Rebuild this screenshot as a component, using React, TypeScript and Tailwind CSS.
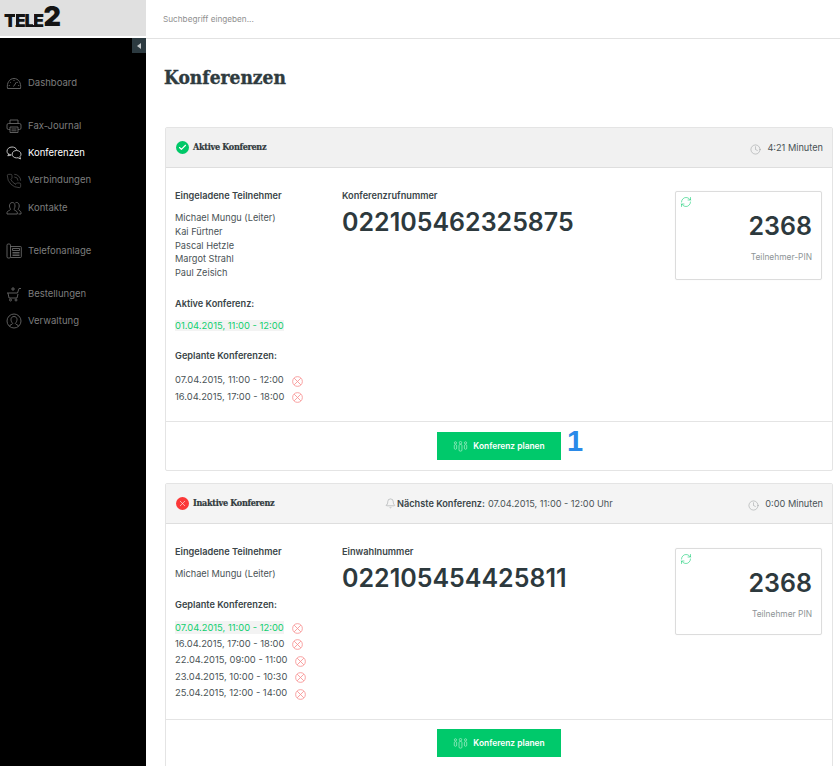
import React from "react";
import { PhoneCall, Check, X, RefreshCw, Clock, Bell } from "lucide-react";

const sans = "font-['Inter','Liberation_Sans',sans-serif]";
const slab = "font-['DejaVu_Serif_Condensed','DejaVu_Serif','Liberation_Serif',serif]";

type IconProps = { className?: string; strokeWidth?: number };

const GaugeIcon = ({ className }: IconProps) => (
  <svg viewBox="0 0 16 16" fill="none" stroke="currentColor" strokeWidth="0.9" className={className}>
    <path d="M1.500 13.500C.5 8 3.500 3.500 8 3.500s7.500 4.500 6.500 10z" />
    <path d="M8 5v1M4 7l.8.7M12 7l-.8.7M2.800 10.500h1M12.200 10.500h1M7.500 11.500l3-4.500" />
  </svg>
);

const PrinterIcon = ({ className }: IconProps) => (
  <svg viewBox="0 0 16 16" fill="none" stroke="currentColor" strokeWidth="0.9" className={className}>
    <path d="M4 5.500V2h8v3.500" />
    <path d="M4 11.500H2.500a1.500 1.500 0 0 1-1.500-1.500V7a1.500 1.500 0 0 1 1.500-1.500h11A1.500 1.500 0 0 1 15 7v3a1.500 1.500 0 0 1-1.500 1.500H12" />
    <path d="M4 9h8v5.500H4zM5.500 11h5M5.500 12.800h5" />
  </svg>
);

// Two overlapping speech bubbles
const BubblesIcon = ({ className }: IconProps) => (
  <svg viewBox="0 0 16 16" fill="none" stroke="currentColor" strokeWidth="0.9" className={className}>
    <path d="M5.500 10C3 10 1 8.400 1 6.200S3 2 6 2c2.300 0 4 1 4.700 2.800" />
    <path d="M3 8.800L1.800 10.800 5 10" />
    <path d="M10.500 5.500c-2.500 0-4.300 1.600-4.300 3.700s1.800 3.700 4.300 3.700c.5 0 1-.1 1.500-.2l2.500 1.300-.6-2.300c.7-.7 1.100-1.500 1.100-2.500 0-2.100-2-3.700-4.500-3.700z" />
  </svg>
);

const UsersIcon = ({ className }: IconProps) => (
  <svg viewBox="0 0 16 16" fill="none" stroke="currentColor" strokeWidth="0.9" className={className}>
    <path d="M1 14v-1.500c0-1.500 3-2 3.500-3C4.800 9 3.500 8 3.500 6s1-3.500 2.800-3.500S9 4 9 6 7.800 9 8 9.500c.5 1 3.300 1.500 3.300 3V14z" />
    <path d="M9.300 3c.3-.3.800-.5 1.400-.5C12.300 2.500 13.200 4 13.200 6s-1.200 3-1 3.500c.4 1 2.800 1.500 2.800 3V14h-2.500" />
  </svg>
);

// Handset next to a keypad
const PhoneSystemIcon = ({ className }: IconProps) => (
  <svg viewBox="0 0 16 16" fill="none" stroke="currentColor" strokeWidth="0.9" className={className}>
    <rect x="1" y="1" width="3.500" height="14" rx="1.200" />
    <path d="M4.500 3.500h10a.8.8 0 0 1 .8.800v9.400a.8.8 0 0 1-.8.800h-10" />
    <path d="M6.500 5.500h7v2h-7zM6.500 9.500h7M6.500 11h7M6.500 12.500h7" />
  </svg>
);

const CartIcon = ({ className }: IconProps) => (
  <svg viewBox="0 0 16 16" fill="none" stroke="currentColor" strokeWidth="0.9" className={className}>
    <path d="M1 7h10.500l1.500-4.500H15M2 7l1 5h8l1-4" />
    <path d="M7 1v4M5 3h4" />
    <circle cx="4.500" cy="14" r="1" />
    <circle cx="10" cy="14" r="1" />
  </svg>
);

const ProfileIcon = ({ className }: IconProps) => (
  <svg viewBox="0 0 16 16" fill="none" stroke="currentColor" strokeWidth="0.9" className={className}>
    <circle cx="8" cy="8" r="7" />
    <path d="M3.500 13.300c0-1.500 3-1.800 3.200-2.800C5.800 9.500 5 8 5 6.500 5 4.700 6.200 3.500 8 3.500s3 1.200 3 3c0 1.500-.8 3-1.700 4 .2 1 3.200 1.300 3.200 2.800" />
  </svg>
);

// Three figures on the green button
const PeopleIcon = ({ className }: IconProps) => (
  <svg viewBox="0 0 16 12" fill="none" stroke="currentColor" strokeWidth="0.8" className={className}>
    <circle cx="2.500" cy="2" r="1.200" />
    <rect x="1.200" y="4" width="2.600" height="5" rx="1.200" />
    <circle cx="8" cy="1.800" r="1.300" />
    <rect x="6.400" y="3.800" width="3.200" height="7.200" rx="1.200" />
    <circle cx="13.500" cy="2" r="1.200" />
    <rect x="12.200" y="4" width="2.600" height="5" rx="1.200" />
  </svg>
);

const CancelIcon = () => (
  <svg viewBox="0 0 12 12" fill="none" stroke="#f88f8f" strokeWidth="0.9" className="w-[11px] h-[11px] mt-[2px] shrink-0">
    <circle cx="6" cy="6" r="5.300" />
    <path d="M2.400 2.400l7.200 7.200M9.600 2.400l-7.200 7.200" />
  </svg>
);

const navGroups = [
  [{ label: "Dashboard", icon: GaugeIcon }],
  [
    { label: "Fax-Journal", icon: PrinterIcon },
    { label: "Konferenzen", icon: BubblesIcon, active: true },
    { label: "Verbindungen", icon: PhoneCall },
    { label: "Kontakte", icon: UsersIcon },
  ],
  [{ label: "Telefonanlage", icon: PhoneSystemIcon }],
  [
    { label: "Bestellungen", icon: CartIcon },
    { label: "Verwaltung", icon: ProfileIcon },
  ],
];

const Sidebar = () => (
  <aside className="w-[146px] shrink-0 flex flex-col bg-white">
    <div className="h-[36px] bg-[#e0e0e0] flex items-end pl-[4px] pb-[9px] relative">
      <span className="font-black text-[#141414] text-[18px] tracking-[-1.500px] leading-[13px]">TELE</span>
      <span className="font-black text-[#141414] text-[27px] tracking-[-1px] leading-[20px] ml-[1px]">2</span>
      <span className="absolute left-[15px] top-[12px] w-[1px] h-[13px] bg-[#e0e0e0]" />
      <span className="absolute left-[33px] top-[12px] w-[1px] h-[13px] bg-[#e0e0e0]" />
    </div>
    <div className="mt-[2px] flex-1 bg-black relative pt-[38px]">
      <div className="absolute right-0 top-0 w-[14px] h-[15px] bg-[#2c3a40] flex items-center justify-center">
        <span className="w-0 h-0 border-y-[3px] border-y-transparent border-r-[4px] border-r-[#c5c9cb]" />
      </div>
      <nav className="flex flex-col gap-[29px]">
        {navGroups.map((group, i) => (
          <div key={i} className="flex flex-col gap-[13.300px]">
            {group.map((item) => {
              const Icon = item.icon;
              return (
                <a
                  key={item.label}
                  className={`flex items-center h-[14px] pl-[6px] gap-[6px] text-[9.500px] ${
                    item.active ? "text-white" : "text-[#7d7d7d]"
                  }`}
                >
                  <Icon className={`w-[16px] h-[16px] ${item.active ? "text-[#d0d0d0]" : "text-[#666666]"}`} strokeWidth={0.9} />
                  {item.label}
                </a>
              );
            })}
          </div>
        ))}
      </nav>
    </div>
  </aside>
);

const Label = ({ children, className = "" }: { children: React.ReactNode; className?: string }) => (
  <p className={`text-[9.200px] font-semibold text-[#3b4649] leading-[14px] ${className}`}>{children}</p>
);

const DateRow = ({ text, active }: { text: string; active?: boolean }) => (
  <div className="flex items-center h-[16.500px] gap-[8px] text-[9.400px]">
    <span className={active ? "text-[#10cf6e] bg-[#f3f3f3] leading-[13px]" : ""}>{text}</span>
    <CancelIcon />
  </div>
);

const Header = ({
  active,
  title,
  minutes,
  next,
}: {
  active: boolean;
  title: string;
  minutes: string;
  next?: boolean;
}) => (
  <div
    className={`h-[40px] border-b border-[#dedede] flex items-center pl-[10px] pr-[9px] relative ${
      active ? "bg-[#f1f1f1]" : "bg-[#f4f4f4]"
    }`}
  >
    <span
      className={`w-[13px] h-[13px] rounded-full flex items-center justify-center text-white ${
        active ? "bg-[#00c868]" : "bg-[#fb3838]"
      }`}
    >
      {active ? <Check size={9} strokeWidth={3} /> : <X size={9} strokeWidth={1.500} />}
    </span>
    <span className={`${slab} ml-[4px] text-[9px] font-bold tracking-[-0.300px] [-webkit-text-stroke:0.2px] text-[#30393c]`}>{title}</span>
    {next && (
      <span className="absolute left-[219px] flex items-center text-[9.200px] text-[#4a5356]">
        <Bell size={11} strokeWidth={1} className="text-[#8a8f91] mr-[1px]" />
        <b className="font-semibold text-[#3b4649] mr-[3px]">Nächste Konferenz:</b>
        07.04.2015, 11:00 - 12:00 Uhr
      </span>
    )}
    <span className="ml-auto flex items-center gap-[6px] text-[9.200px] text-[#4a5356]">
      <Clock size={11} strokeWidth={1} className="text-[#8a8f91] mt-[3px]" />
      {minutes}
    </span>
  </div>
);

const PinBox = ({ label, className = "" }: { label: string; className?: string }) => (
  <div
    className={`w-[147px] shrink-0 rounded-[2px] border border-[#dcdcdc] shadow-[0_0_1px_rgba(0,0,0,0.1)] relative flex flex-col items-end pr-[9px] pt-[19px] ${className}`}
  >
    <RefreshCw size={12} strokeWidth={1.200} className="absolute left-[4px] top-[4px] text-[#16cf75]" />
    <span className="text-[25px] leading-[30px] font-semibold text-[#2d393d]">2368</span>
    <span className="mt-[10px] text-[8.400px] leading-[12px] text-[#8d9496]">{label}</span>
  </div>
);

const PlanButton = ({ marker }: { marker?: boolean }) => (
  <div className="relative">
    <button className="w-[124px] h-[28px] bg-[#00c96b] text-white text-[8.400px] font-semibold flex items-center justify-center gap-[5px]">
      <PeopleIcon className="w-[15px] h-[11px] text-[#a8eec9]" />
      Konferenz planen
    </button>
    {marker && (
      <span className="absolute left-[130px] top-[-8px] font-['Liberation_Sans',sans-serif] font-bold text-[29px] leading-[34px] text-[#2b8ae8]">
        1
      </span>
    )}
  </div>
);

const App: React.FC = () => {
  return (
    <div className={`${sans} w-[840px] h-[766px] overflow-hidden flex bg-white text-[#4a5356]`}>
      <Sidebar />
      <main className="flex-1 min-w-0 flex flex-col">
        <div className="h-[39px] shrink-0 border-b border-[#e2e2e2] flex items-center pl-[17px] text-[8.200px] text-[#8f8f8f]">
          Suchbegriff eingeben...
        </div>
        <div className="pl-[19px] pr-[7px]">
          <h1 className={`${slab} mt-[25px] -ml-[1px] text-[19px] leading-[26px] font-bold [-webkit-text-stroke:0.4px] text-[#2f3b3f]`}>Konferenzen</h1>

          {/* Active conference */}
          <section className="mt-[37px] border border-[#e4e4e4] rounded-[2px]">
            <Header active title="Aktive Konferenz" minutes="4:21 Minuten" />
            <div className="h-[253px] flex pl-[9px] pr-[10px] pt-[21px] pb-[141px]">
              <div className="w-[167px] text-[9.200px] leading-[13.800px]">
                <Label>Eingeladene Teilnehmer</Label>
                <div className="mt-[8px]">
                  <p>Michael Mungu (Leiter)</p>
                  <p>Kai Fürtner</p>
                  <p>Pascal Hetzle</p>
                  <p>Margot Strahl</p>
                  <p>Paul Zeisich</p>
                </div>
                <Label className="mt-[17px]">Aktive Konferenz:</Label>
                <p className="mt-[8px] text-[9.400px]">
                  <span className="text-[#10cf6e] bg-[#f3f3f3]">01.04.2015, 11:00 - 12:00</span>
                </p>
                <Label className="mt-[16px]">Geplante Konferenzen:</Label>
                <div className="mt-[9px]">
                  <DateRow text="07.04.2015, 11:00 - 12:00" />
                  <DateRow text="16.04.2015, 17:00 - 18:00" />
                </div>
              </div>
              <div className="flex-1">
                <Label>Konferenzrufnummer</Label>
                <p className="mt-[3px] text-[25px] leading-[32px] font-semibold text-[#2d393d]">022105462325875</p>
              </div>
              <PinBox label="Teilnehmer-PIN" className="mt-[2px]" />
            </div>
            <div className="h-[49px] border-t border-[#e4e4e4] flex justify-center pt-[10px]">
              <PlanButton marker />
            </div>
          </section>

          {/* Inactive conference */}
          <section className="mt-[12px] border border-[#e4e4e4] rounded-[2px]">
            <Header active={false} title="Inaktive Konferenz" minutes="0:00 Minuten" next />
            <div className="h-[195px] flex pl-[9px] pr-[10px] pt-[21px] pb-[84px]">
              <div className="w-[167px] text-[9.200px] leading-[13.800px]">
                <Label>Eingeladene Teilnehmer</Label>
                <p className="mt-[8px]">Michael Mungu (Leiter)</p>
                <Label className="mt-[17px]">Geplante Konferenzen:</Label>
                <div className="mt-[7px]">
                  <DateRow text="07.04.2015, 11:00 - 12:00" active />
                  <DateRow text="16.04.2015, 17:00 - 18:00" />
                  <DateRow text="22.04.2015, 09:00 - 11:00" />
                  <DateRow text="23.04.2015, 10:00 - 10:30" />
                  <DateRow text="25.04.2015, 12:00 - 14:00" />
                </div>
              </div>
              <div className="flex-1">
                <Label>Einwahlnummer</Label>
                <p className="mt-[3px] text-[25px] leading-[32px] font-semibold text-[#2d393d]">022105454425811</p>
              </div>
              <PinBox label="Teilnehmer PIN" className="mt-[3px]" />
            </div>
            <div className="h-[48px] border-t border-[#e4e4e4] flex justify-center pt-[9px]">
              <PlanButton />
            </div>
          </section>
        </div>
      </main>
    </div>
  );
};

export default App;
